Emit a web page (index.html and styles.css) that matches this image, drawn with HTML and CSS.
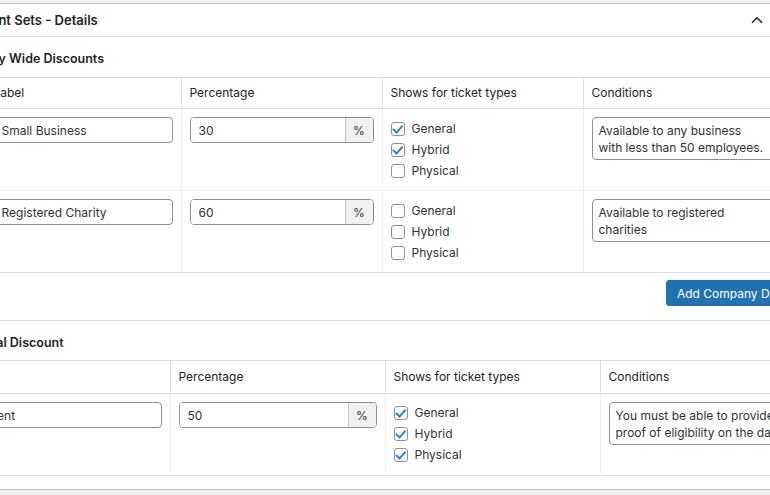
FILE: index.html
```html
<!DOCTYPE html>
<html lang="en">
<head>
<meta charset="utf-8">
<title>Discount Sets - Details</title>
<link rel="stylesheet" href="styles.css">
</head>
<body>
<div class="screen">
  <div class="postbox">
    <div class="postbox-header">
      <h2 class="postbox-title">Discount Sets - Details</h2>
      <button class="toggle" type="button" aria-label="Collapse">
        <svg width="12" height="8" viewBox="0 0 12 8"><path d="M1 6.8 L6 1.8 L11 6.8" fill="none" stroke="#1d2327" stroke-width="1.6"/></svg>
      </button>
    </div>

    <div class="section">
      <h3 class="section-title">Company Wide Discounts</h3>
      <table class="grid grid-company">
        <colgroup>
          <col class="w-handle"><col class="w-label"><col class="w-perc"><col class="w-types"><col class="w-cond"><col class="w-actions">
        </colgroup>
        <thead>
          <tr><th></th><th>Label</th><th>Percentage</th><th>Shows for ticket types</th><th>Conditions</th><th></th></tr>
        </thead>
        <tbody>
          <tr>
            <td></td>
            <td><input class="field" type="text" value="Small Business"></td>
            <td><div class="group"><input class="group-input" type="text" value="30"><span class="addon">%</span></div></td>
            <td>
              <ul class="checks">
                <li><label><input type="checkbox" checked> General</label></li>
                <li><label><input type="checkbox" checked> Hybrid</label></li>
                <li><label><input type="checkbox"> Physical</label></li>
              </ul>
            </td>
            <td><textarea class="area">Available to any business with less than 50 employees.</textarea></td>
            <td></td>
          </tr>
          <tr>
            <td></td>
            <td><input class="field" type="text" value="Registered Charity"></td>
            <td><div class="group"><input class="group-input" type="text" value="60"><span class="addon">%</span></div></td>
            <td>
              <ul class="checks">
                <li><label><input type="checkbox"> General</label></li>
                <li><label><input type="checkbox"> Hybrid</label></li>
                <li><label><input type="checkbox"> Physical</label></li>
              </ul>
            </td>
            <td><textarea class="area">Available to registered charities</textarea></td>
            <td></td>
          </tr>
        </tbody>
      </table>
      <div class="actions"><button class="btn" type="button">Add Company Discount</button></div>
    </div>

    <div class="section section-last">
      <h3 class="section-title section-title-ind">Individual Discount</h3>
      <table class="grid grid-ind">
        <colgroup>
          <col class="w-q"><col class="w-q"><col class="w-q"><col class="w-q">
        </colgroup>
        <thead>
          <tr><th>Label</th><th>Percentage</th><th>Shows for ticket types</th><th>Conditions</th></tr>
        </thead>
        <tbody>
          <tr>
            <td><input class="field" type="text" value="Student"></td>
            <td><div class="group"><input class="group-input" type="text" value="50"><span class="addon">%</span></div></td>
            <td>
              <ul class="checks checks-ind">
                <li><label><input type="checkbox" checked> General</label></li>
                <li><label><input type="checkbox" checked> Hybrid</label></li>
                <li><label><input type="checkbox" checked> Physical</label></li>
              </ul>
            </td>
            <td><textarea class="area">You must be able to provide proof of eligibility on the day.</textarea></td>
          </tr>
        </tbody>
      </table>
    </div>
  </div>
</div>
</body>
</html>
```

FILE: styles.css
```css
html, body {
  margin: 0;
  padding: 0;
}
body {
  background: #f0f0f1;
  overflow: hidden;
  font-family: Inter, "Liberation Sans", Arial, sans-serif;
  font-size: 12px;
  color: #1d2327;
}
.screen {
  margin-left: -58px;
  padding-top: 3px;
  width: 834px;
}
.postbox {
  background: #fff;
  border: 1px solid #c3c4c7;
}
.postbox-header {
  display: flex;
  align-items: center;
  justify-content: space-between;
  height: 32px;
  border-bottom: 1px solid #dcdcde;
}
.postbox-title {
  margin: 0;
  padding-left: 12px;
  font-size: 13px;
  font-weight: 600;
  line-height: 16px;
}
.toggle {
  width: 36px;
  height: 32px;
  padding: 0;
  border: 0;
  background: none;
  display: flex;
  align-items: center;
  justify-content: center;
}
.section {
  padding: 14px 12px 14px;
}
.section + .section {
  border-top: 1px solid #dcdcde;
}
.section-last {
  padding-bottom: 13px;
}
.section-title {
  margin: 0 0 10px -7px;
  font-size: 12.5px;
  font-weight: 600;
  line-height: 16px;
}
.section-title-ind {
  margin-bottom: 9px;
  margin-left: -7px;
}
.grid {
  border-collapse: collapse;
  table-layout: fixed;
  width: 860px;
}
.w-handle { width: 30px; }
.w-label { width: 196px; }
.w-perc { width: 201px; }
.w-types { width: 201px; }
.w-cond { width: 204px; }
.w-actions { width: 28px; }
.w-q { width: 215px; }
.grid th {
  text-align: left;
  font-weight: 400;
  padding: 8px;
  line-height: 14px;
  border-right: 1px solid #dcdcde;
}
.grid-ind th {
  padding: 9px 8px 9px;
}
.grid thead tr {
  border-top: 1px solid #dcdcde;
  border-bottom: 1px solid #dcdcde;
}
.grid td {
  padding: 8px;
  vertical-align: top;
  border-right: 1px solid #f0f0f1;
}
.grid tbody tr {
  border-bottom: 1px solid #f0f0f1;
}
.grid tbody tr:last-child {
  border-bottom: 1px solid #dcdcde;
}
.field {
  box-sizing: border-box;
  width: 100%;
  height: 26px;
  margin: 0;
  padding: 0 8px 0 7px;
  border: 1px solid #8c8f94;
  border-radius: 4px;
  font: inherit;
  color: #2c3338;
  background: #fff;
}
.group {
  display: flex;
  box-sizing: border-box;
  height: 26px;
  border: 1px solid #8c8f94;
  border-radius: 4px;
  overflow: hidden;
}
.group-input {
  flex: 1;
  min-width: 0;
  margin: 0;
  padding: 0 8px;
  border: 0;
  font: inherit;
  color: #2c3338;
  background: #fff;
}
.addon {
  width: 27px;
  display: flex;
  align-items: center;
  justify-content: center;
  background: #f0f0f1;
  border-left: 1px solid #c3c4c7;
  color: #2c3338;
}
.checks {
  list-style: none;
  margin: 0;
  padding: 1px 0 1px;
}
.checks-ind {
  padding: 0 0 2px;
}
.checks li {
  height: 21px;
  display: flex;
  align-items: center;
}
.checks label {
  display: flex;
  align-items: center;
  gap: 7px;
  color: #2c3338;
}
.checks input {
  appearance: none;
  -webkit-appearance: none;
  position: relative;
  box-sizing: border-box;
  width: 14px;
  height: 14px;
  margin: 0;
  border: 1px solid #8c8f94;
  border-radius: 3px;
  background: #fff;
}
.checks input:checked::before {
  content: "";
  position: absolute;
  left: 3.5px;
  top: 0.5px;
  width: 3.5px;
  height: 7.5px;
  border: solid #3582c4;
  border-width: 0 2px 2px 0;
  transform: rotate(42deg);
}
.area {
  display: block;
  box-sizing: border-box;
  width: 100%;
  height: 43px;
  margin: 0;
  padding: 4px 12px 4px 6px;
  border: 1px solid #8c8f94;
  border-radius: 4px;
  font: inherit;
  line-height: 17px;
  color: #2c3338;
  overflow: hidden;
}
.actions {
  width: 867px;
  display: flex;
  justify-content: flex-end;
  margin-top: 7px;
}
.btn {
  height: 26px;
  padding: 0 10px;
  border: 1px solid #2271b1;
  border-radius: 3px;
  background: #2271b1;
  color: #fff;
  font: inherit;
  white-space: nowrap;
}
```
